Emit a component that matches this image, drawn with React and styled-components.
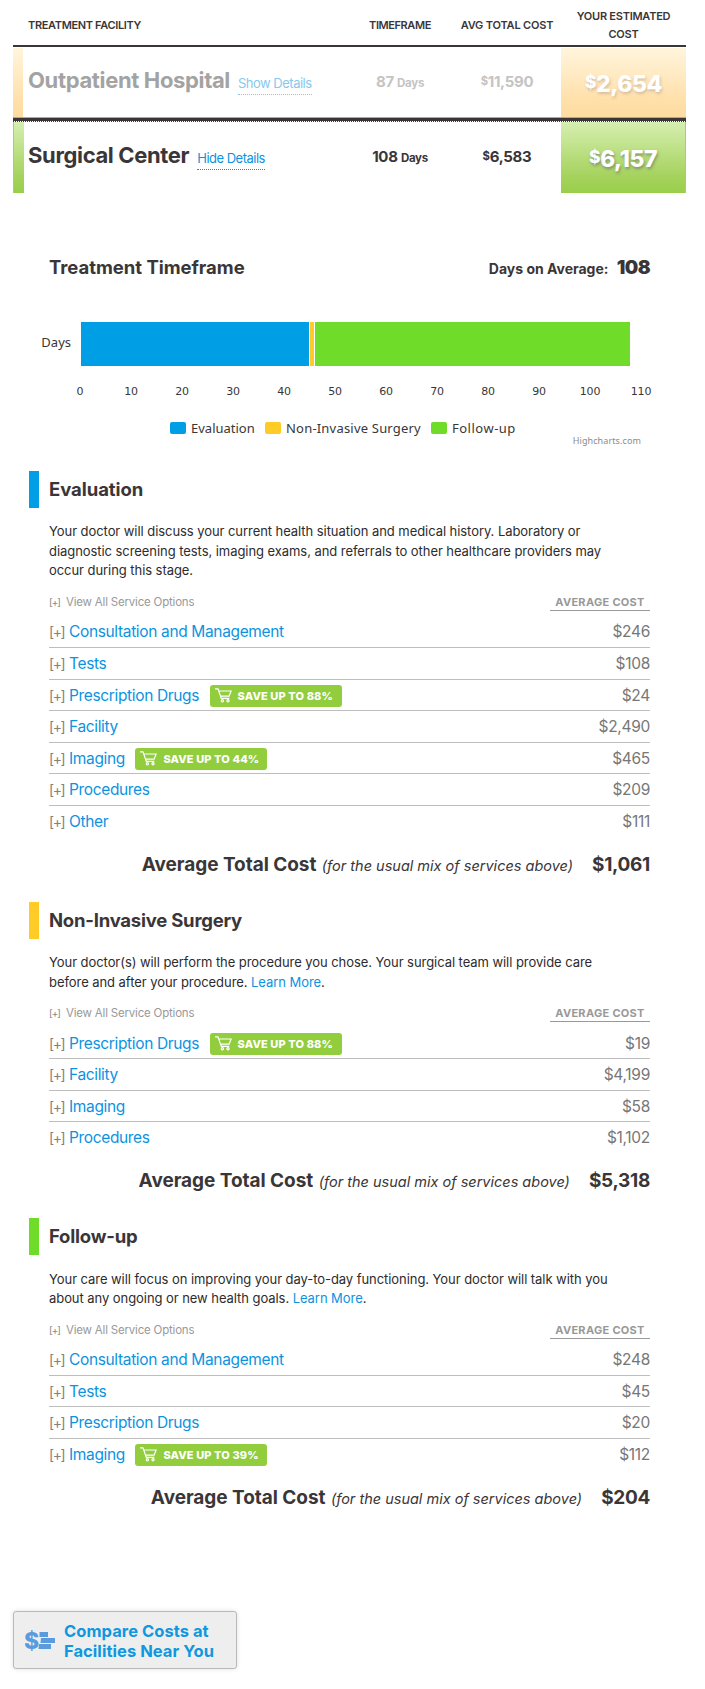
import React from "react";
import styled, { createGlobalStyle } from "styled-components";

const ink = "#3a3638";
const link = "#0c93df";
const blue = "#009ee4";
const yellow = "#ffcb27";
const green = "#6edc29";

const GlobalStyle = createGlobalStyle`
  body {
    margin: 0;
    background: #fff;
    color: ${ink};
    font-family: Inter, "Liberation Sans", sans-serif;
  }
  * { box-sizing: border-box; }
`;

const Page = styled.main`
  width: 705px;
  height: 1689px;
  padding: 0 19px 0 13px;
  white-space: nowrap;
`;

/* facility table */
const columns = "334px 106px 108px 125px";

const TableHead = styled.div`
  display: grid;
  grid-template-columns: ${columns};
  align-items: center;
  height: 47px;
  padding-top: 4px;
  border-bottom: 2px solid ${ink};
  font-size: 11px;
  font-weight: 600;
  line-height: 18px;
  text-align: center;
`;
const HeadCell = styled.span`
  letter-spacing: ${(p) => p.$ls};
`;
const HeadName = styled(HeadCell)`
  padding-left: 15px;
  text-align: left;
`;
const FacilityRow = styled.div`
  display: grid;
  grid-template-columns: ${columns};
  grid-template-rows: 100%;
  height: ${(p) => (p.$faded ? 70 : 71)}px;
  padding-top: ${(p) => (p.$faded ? 1 : 0)}px;
`;
const NameCell = styled.div`
  display: flex;
  align-items: baseline;
  border-left: ${(p) => (p.$faded ? 0 : 1)}px solid #b8b8b8;
  color: ${(p) => (p.$faded ? "#a3a3a3" : ink)};
`;
const Strip = styled.i`
  align-self: stretch;
  width: 10px;
  margin-right: ${(p) => (p.$faded ? 5 : 4)}px;
  background: ${(p) => p.$bg};
`;
const FacilityName = styled.span`
  font-size: 22px;
  font-weight: 700;
  line-height: ${(p) => (p.$faded ? 64 : 67)}px;
  letter-spacing: -0.35px;
`;
const Toggle = styled.a`
  margin-left: 8px;
  padding-bottom: 3px;
  border-bottom: 1px dotted ${(p) => (p.$faded ? "#86c9ef" : link)};
  color: ${(p) => (p.$faded ? "#86c9ef" : link)};
  font-size: 13px;
  line-height: 16px;
  letter-spacing: -0.5px;
`;
const Figure = styled.span`
  padding-top: ${(p) => (p.$faded ? 1 : 2)}px;
  color: ${(p) => (p.$faded ? "#c4c4c4" : ink)};
  font-size: 15px;
  font-weight: 700;
  line-height: 66px;
  letter-spacing: -0.3px;
  text-align: center;
  small { font-size: 11.5px; }
`;
const Dollar = styled.span`
  position: relative;
  top: -0.22em;
  font-size: 0.75em;
`;
const Estimate = styled.span`
  padding-top: ${(p) => (p.$faded ? 25 : 26)}px;
  border-right: ${(p) => (p.$faded ? 0 : 1)}px solid #b8b8b8;
  background: ${(p) => p.$bg};
  color: #fff;
  font-size: 23px;
  font-weight: 800;
  line-height: 23px;
  letter-spacing: -0.4px;
  text-align: center;
  text-shadow: 1px 2px 3px rgba(90, 80, 90, ${(p) => (p.$faded ? 0.25 : 0.5)});
`;
const Divider = styled.div`
  height: 5px;
  border-top: 1px solid #a9a9a9;
  border-bottom: 1px dotted ${ink};
  background: linear-gradient(${ink}, ${ink}) 0 0 / 100% 3px no-repeat;
`;

/* timeframe */
const Timeframe = styled.section`
  height: 278px;
  padding-top: 61px;
`;
const TimeHead = styled.div`
  display: flex;
  justify-content: space-between;
  align-items: baseline;
  height: 68px;
  padding: 0 36px;
  font-weight: 700;
  line-height: 26px;
`;
const Title = styled.h2`
  margin: 0;
  font-size: 18.5px;
  font-weight: 700;
  letter-spacing: ${(p) => p.$ls};
`;
const Average = styled.span`
  font-size: 14px;
  b {
    margin-left: 5px;
    font-size: 19px;
    letter-spacing: -0.6px;
  }
`;
const Bars = styled.div`
  display: flex;
  align-items: center;
  gap: 1px;
  height: 44px;
`;
const AxisName = styled.span`
  width: 67px;
  padding: 0 9px 4px 0;
  font: 13px/18px "Noto Sans", sans-serif;
  text-align: right;
`;
const Bar = styled.i`
  width: ${(p) => p.$w}px;
  height: 44px;
  background: ${(p) => p.$c};
`;
const Ticks = styled.div`
  display: flex;
  margin: 16px 0 0 41.5px;
  font: 11px/20px "DejaVu Sans", sans-serif;
  letter-spacing: -0.2px;
  span {
    width: 51px;
    text-align: center;
  }
`;
const Legend = styled.div`
  display: flex;
  margin: 16px 0 0 157px;
  height: 20px;
  font: 13px/20px "Noto Sans", sans-serif;
`;
const LegendItem = styled.span`
  display: flex;
  align-items: center;
  width: ${(p) => p.$w}px;
  letter-spacing: ${(p) => p.$ls};
  i {
    width: 16px;
    height: 12px;
    margin-right: 5px;
    border-radius: 2px;
    background: ${(p) => p.$c};
  }
`;
const Credit = styled.div`
  margin-top: -3px;
  padding-right: 45px;
  color: #8b8b8b;
  font: 9px/12px "Noto Sans", sans-serif;
  letter-spacing: 0.1px;
  text-align: right;
`;

/* stages */
const Stage = styled.section`
  padding: 0 36px 0 16px;
`;
const StageHead = styled.div`
  height: 37px;
  padding-left: 10px;
  border-left: 10px solid ${(p) => p.$c};
  line-height: 36px;
`;
const StageBody = styled.div`
  padding-left: 20px;
`;
const Intro = styled.p`
  margin: 14.2px 0 0;
  color: #2d2b2c;
  font-size: 13px;
  line-height: 19.6px;
  letter-spacing: -0.06px;
`;
const Line = styled.span`
  display: block;
`;
const Link = styled.a`
  color: ${link};
`;
const Options = styled.div`
  display: flex;
  justify-content: space-between;
  align-items: flex-end;
  height: 30px;
  margin-bottom: 5.4px;
  color: #999;
  font-size: 11.5px;
  line-height: 18px;
`;
const ViewAll = styled.span`
  display: flex;
  letter-spacing: -0.2px;
`;
const CostHead = styled.span`
  width: 100px;
  height: 18px;
  border-bottom: 1px solid #999;
  font-size: 11px;
  font-weight: 700;
  line-height: 18px;
  letter-spacing: 0.3px;
  text-align: center;
`;
const SmallExpander = styled.span`
  width: 17px;
  color: #888;
  font-size: 10px;
  letter-spacing: -1px;
`;
const Expander = styled.span`
  width: 20px;
  color: #85807a;
  font-size: 14px;
  letter-spacing: -1.4px;
`;
const ServiceRow = styled.div`
  display: flex;
  height: 31.6px;
  border-bottom: 1px solid #bdbdbd;
  font-size: 15.5px;
  line-height: 31px;
  &:last-child { border-bottom-color: transparent; }
`;
const ServiceName = styled.a`
  color: ${link};
  letter-spacing: -0.35px;
`;
const Price = styled.span`
  margin-left: auto;
  color: #777;
  letter-spacing: -0.3px;
`;
const Badge = styled.span`
  display: flex;
  align-items: center;
  width: 132px;
  height: 22px;
  margin: 5px 0 0 10.5px;
  padding-left: 5px;
  border-radius: 3px;
  background: #92cd3d;
  color: #fff;
  font-size: 11px;
  font-weight: 800;
  letter-spacing: 0.12px;
  line-height: 22px;
  svg { margin-right: 6px; }
`;
const Total = styled.div`
  display: flex;
  justify-content: flex-end;
  align-items: baseline;
  height: 64.4px;
  padding-top: 13px;
  font-size: 19px;
  font-weight: 700;
  line-height: 27px;
  em {
    margin: 0 19px 0 5.5px;
    font-size: 14.5px;
    font-weight: 400;
  }
`;
const TotalLabel = styled.span`
  letter-spacing: -0.05px;
`;
const TotalPrice = styled.span`
  letter-spacing: -0.3px;
`;

const Compare = styled.button`
  display: flex;
  align-items: center;
  width: 224px;
  height: 58px;
  margin: 76px 0 0;
  padding: 0 0 0 11px;
  border: 1px solid #b9b9b9;
  border-radius: 3px;
  background: #eee;
  box-shadow: 0 0 5px rgba(0, 0, 0, 0.12);
  color: #0f98e0;
  font-family: inherit;
  font-size: 16.5px;
  font-weight: 700;
  line-height: 20px;
  letter-spacing: 0.05px;
  text-align: left;
  svg { margin-right: 8px; }
  span { padding-top: 2px; }
`;

const Cart = () => (
  <svg width="17" height="15" viewBox="0 0 17 15" fill="none" stroke="#fff" strokeWidth="1.2">
    <path d="M0 .9h3l3.3 9.5h8M3.7 3h12.4l-2 5.2H5.6" />
    <circle cx="7.4" cy="12.8" r="1.1" />
    <circle cx="13" cy="12.8" r="1.1" />
  </svg>
);

const CompareIcon = () => (
  <svg width="31" height="26" viewBox="0 0 31 26" fill="#5a9bdd">
    <text x="-1" y="21.5" fontSize="23" fontWeight="800" fontFamily="Inter, sans-serif">$</text>
    <path d="M14.5 5h8.5v5h-8.5zM16 11h14v5H15.5zM14 17h12v5H13.5z" />
  </svg>
);

const stages = [
  {
    name: "Evaluation",
    color: blue,
    ls: "-0.05px",
    intro: [
      ["Your doctor will discuss your current health situation and medical history. Laboratory or"],
      ["diagnostic screening tests, imaging exams, and referrals to other healthcare providers may"],
      ["occur during this stage."],
    ],
    services: [
      ["Consultation and Management", "$246"],
      ["Tests", "$108"],
      ["Prescription Drugs", "$24", "88%"],
      ["Facility", "$2,490"],
      ["Imaging", "$465", "44%"],
      ["Procedures", "$209"],
      ["Other", "$111"],
    ],
    total: "$1,061",
  },
  {
    name: "Non-Invasive Surgery",
    color: yellow,
    ls: "-0.23px",
    intro: [
      ["Your doctor(s) will perform the procedure you chose. Your surgical team will provide care"],
      ["before and after your procedure. ", true],
    ],
    services: [
      ["Prescription Drugs", "$19", "88%"],
      ["Facility", "$4,199"],
      ["Imaging", "$58"],
      ["Procedures", "$1,102"],
    ],
    total: "$5,318",
  },
  {
    name: "Follow-up",
    color: green,
    ls: "-0.22px",
    intro: [
      ["Your care will focus on improving your day-to-day functioning. Your doctor will talk with you"],
      ["about any ongoing or new health goals. ", true],
    ],
    services: [
      ["Consultation and Management", "$248"],
      ["Tests", "$45"],
      ["Prescription Drugs", "$20"],
      ["Imaging", "$112", "39%"],
    ],
    total: "$204",
  },
];

const orange = "linear-gradient(#fff5dd, #ffe0aa 75%, #fddca0)";
const leaf = "linear-gradient(#d6efb0, #a6d35f 75%, #98cf4a)";

function Facility({ name, action, days, cost, estimate, bg, faded }) {
  return (
    <FacilityRow $faded={faded}>
      <NameCell $faded={faded}>
        <Strip $bg={bg} $faded={faded} />
        <FacilityName $faded={faded}>{name}</FacilityName>
        <Toggle $faded={faded}>{action}</Toggle>
      </NameCell>
      <Figure $faded={faded}>{days} <small>Days</small></Figure>
      <Figure $faded={faded}><Dollar>$</Dollar>{cost}</Figure>
      <Estimate $faded={faded} $bg={bg}><Dollar>$</Dollar>{estimate}</Estimate>
    </FacilityRow>
  );
}

export default function App() {
  return (
    <Page>
      <GlobalStyle />
      <TableHead>
        <HeadName $ls="-0.35px">TREATMENT FACILITY</HeadName>
        <HeadCell $ls="-0.4px">TIMEFRAME</HeadCell>
        <HeadCell $ls="-0.17px">AVG TOTAL COST</HeadCell>
        <HeadCell $ls="-0.25px">YOUR ESTIMATED<br />COST</HeadCell>
      </TableHead>
      <Facility name="Outpatient Hospital" action="Show Details" days="87" cost="11,590" estimate="2,654" bg={orange} faded />
      <Divider />
      <Facility name="Surgical Center" action="Hide Details" days="108" cost="6,583" estimate="6,157" bg={leaf} />

      <Timeframe>
        <TimeHead>
          <Title $ls="-0.03px">Treatment Timeframe</Title>
          <Average>Days on Average: <b>108</b></Average>
        </TimeHead>
        <Bars>
          <AxisName>Days</AxisName>
          <Bar $w={228} $c={blue} />
          <Bar $w={4} $c={yellow} />
          <Bar $w={315} $c={green} />
        </Bars>
        <Ticks>
          {[0, 10, 20, 30, 40, 50, 60, 70, 80, 90, 100, 110].map((n) => <span key={n}>{n}</span>)}
        </Ticks>
        <Legend>
          <LegendItem $w={95} $c={blue} $ls="0">
            <i />Evaluation
          </LegendItem>
          <LegendItem $w={166} $c={yellow} $ls="0.2px">
            <i />Non-Invasive Surgery
          </LegendItem>
          <LegendItem $w={90} $c={green} $ls="0.5px">
            <i />Follow-up
          </LegendItem>
        </Legend>
        <Credit>Highcharts.com</Credit>
      </Timeframe>

      {stages.map((s) => (
        <Stage key={s.name}>
          <StageHead $c={s.color}><Title $ls={s.ls}>{s.name}</Title></StageHead>
          <StageBody>
            <Intro>
              {s.intro.map(([text, more]) => (
                <Line key={text}>{text}{more && <><Link>Learn More</Link>.</>}</Line>
              ))}
            </Intro>
            <Options>
              <ViewAll><SmallExpander>[+]</SmallExpander>View All Service Options</ViewAll>
              <CostHead>AVERAGE COST</CostHead>
            </Options>
            <div>
              {s.services.map(([name, price, save]) => (
                <ServiceRow key={name}>
                  <Expander>[+]</Expander>
                  <ServiceName>{name}</ServiceName>
                  {save && <Badge><Cart />SAVE UP TO {save}</Badge>}
                  <Price>{price}</Price>
                </ServiceRow>
              ))}
            </div>
            <Total>
              <TotalLabel>Average Total Cost</TotalLabel>
              <em>(for the usual mix of services above)</em>
              <TotalPrice>{s.total}</TotalPrice>
            </Total>
          </StageBody>
        </Stage>
      ))}

      <Compare>
        <CompareIcon />
        <span>Compare Costs at<br />Facilities Near You</span>
      </Compare>
    </Page>
  );
}
